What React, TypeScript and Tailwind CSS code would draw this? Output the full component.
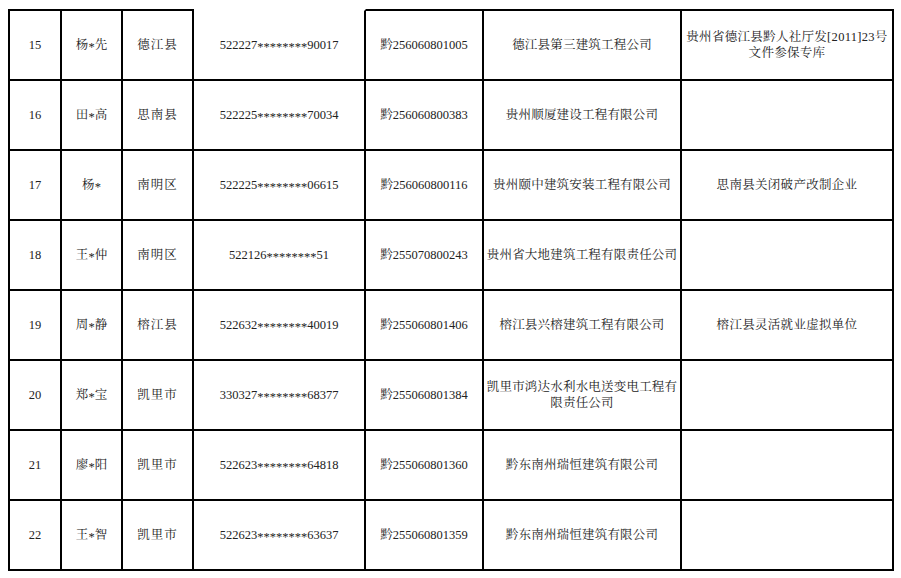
import React from 'react';

type Row = {
  no: string;
  name: string;
  area: string;
  id: string;
  cert: string;
  company: string;
  note?: React.ReactNode;
};

const rows: Row[] = [
  { no: '15', name: '杨*先', area: '德江县', id: '522227********90017', cert: '黔256060801005', company: '德江县第三建筑工程公司', note: <>贵州省德江县黔人社厅发[2011]23号<br />文件参保专库</> },
  { no: '16', name: '田*高', area: '思南县', id: '522225********70034', cert: '黔256060800383', company: '贵州顺厦建设工程有限公司' },
  { no: '17', name: '杨*', area: '南明区', id: '522225********06615', cert: '黔256060800116', company: '贵州颐中建筑安装工程有限公司', note: '思南县关闭破产改制企业' },
  { no: '18', name: '王*仲', area: '南明区', id: '522126********51', cert: '黔255070800243', company: '贵州省大地建筑工程有限责任公司' },
  { no: '19', name: '周*静', area: '榕江县', id: '522632********40019', cert: '黔255060801406', company: '榕江县兴榕建筑工程有限公司', note: '榕江县灵活就业虚拟单位' },
  { no: '20', name: '郑*宝', area: '凯里市', id: '330327********68377', cert: '黔255060801384', company: '凯里市鸿达水利水电送变电工程有限责任公司' },
  { no: '21', name: '廖*阳', area: '凯里市', id: '522623********64818', cert: '黔255060801360', company: '黔东南州瑞恒建筑有限公司' },
  { no: '22', name: '王*智', area: '凯里市', id: '522623********63637', cert: '黔255060801359', company: '黔东南州瑞恒建筑有限公司' },
];

// SimSun-style asterisks sit in the middle of the line, not up high
function Stars({ text }: { text: string }) {
  const parts = text.split(/(\*+)/);
  return (
    <>
      {parts.map((p, i) =>
        p.startsWith('*') ? (
          <span key={i} className="relative top-[2px]">{p}</span>
        ) : (
          <span key={i}>{p}</span>
        )
      )}
    </>
  );
}

export default function App() {
  return (
    <div className="w-[901px] h-[578px] bg-white text-[#222] text-[12.5px] leading-[16px] font-['Liberation_Serif','Noto_Serif_CJK_SC','Noto_Sans_CJK_SC',serif]">
      <div className="pt-[9px] pl-[8px]">
        <div className="flex flex-col w-[886px]">
          {rows.map((r, i) => {
            const first = i === 0;
            const cell = `shrink-0 flex items-center justify-center text-center border-r-2 border-b-2 border-black ${first ? 'border-t-2' : ''}`;
            return (
              <div key={r.no} className={`flex ${first ? 'h-[72px]' : 'h-[70px]'}`}>
                <div className={`${cell} w-[54px] border-l-2`}>{r.no}</div>
                <div className={`${cell} w-[61px]`}>
                  <Stars text={r.name} />
                </div>
                <div className={`${cell} w-[71px] tracking-[1px]`}>{r.area}</div>
                {/* the ID column has no top rule in the source */}
                <div className={`${cell} w-[172px] ${first ? 'border-t-transparent' : ''}`}>
                  <Stars text={r.id} />
                </div>
                <div className={`${cell} w-[118px]`}>{r.cert}</div>
                <div className={`${cell} w-[198px] tracking-[0.2px]`}>
                  <div>{r.company}</div>
                </div>
                <div className={`${cell} w-[212px] tracking-[0.3px]`}>
                  <div>{r.note}</div>
                </div>
              </div>
            );
          })}
        </div>
      </div>
    </div>
  );
}
